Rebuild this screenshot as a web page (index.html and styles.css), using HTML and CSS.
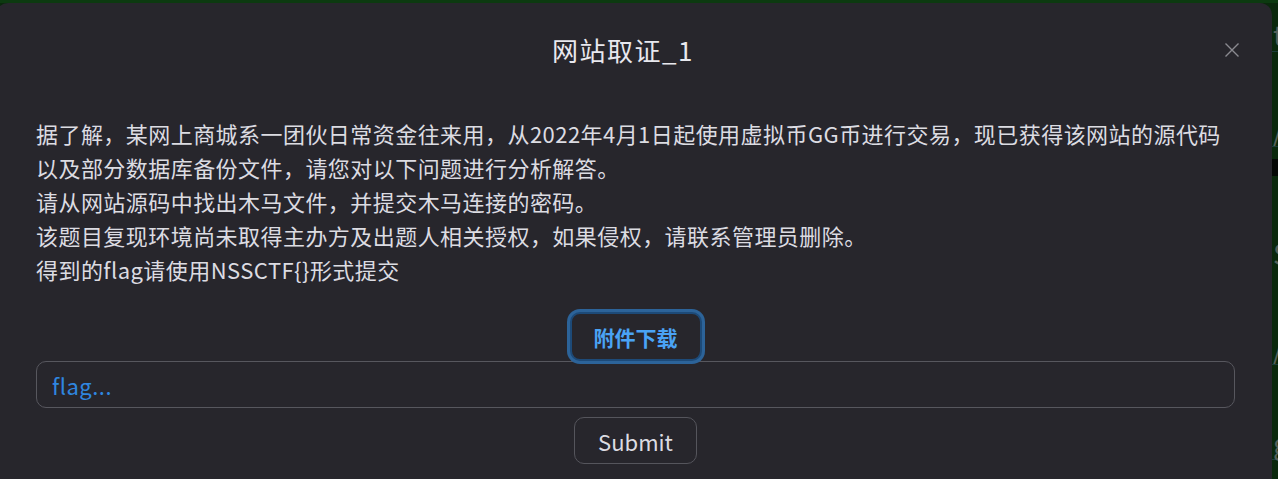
FILE: index.html
```html
<!DOCTYPE html>
<html>
<head>
    <title>网站取证_1</title>
    <link rel="stylesheet" href="styles.css">
</head>
<body>
    <div class="page">
        <div class="page-main"></div>
        <div class="page-side">
            <div class="side-row"><span>t</span></div>
            <div class="side-row"><span>/</span></div>
            <div class="side-block"></div>
            <div class="side-row plain"><span>S</span></div>
            <div class="side-row"><span>/</span></div>
            <div class="side-row"><span>g</span></div>
            <div class="side-row plain"><span>t</span></div>
        </div>
    </div>

    <div class="modal">
        <div class="modal-header">
            <h2 class="modal-title">网站取证_1</h2>
            <button class="close-btn" aria-label="close">
                <svg width="16" height="16" viewBox="0 0 16 16">
                    <path d="M1.5 1.5 L14.5 14.5 M14.5 1.5 L1.5 14.5" stroke="#8a8a90" stroke-width="1.4" fill="none"/>
                </svg>
            </button>
        </div>
        <div class="modal-body">
            <p class="desc">
                据了解，某网上商城系一团伙日常资金往来用，从2022年4月1日起使用虚拟币GG币进行交易，现已获得该网站的源代码以及部分数据库备份文件，请您对以下问题进行分析解答。<br>
                请从网站源码中找出木马文件，并提交木马连接的密码。<br>
                该题目复现环境尚未取得主办方及出题人相关授权，如果侵权，请联系管理员删除。<br>
                得到的flag请使用NSSCTF{}形式提交
            </p>
            <div class="attach-row">
                <button class="attach-btn">附件下载</button>
            </div>
            <input type="text" class="flag-input" placeholder="flag...">
            <div class="submit-row">
                <button class="submit-btn">Submit</button>
            </div>
        </div>
    </div>
</body>
</html>
```

FILE: styles.css
```css
html, body {
    margin: 0;
    padding: 0;
    height: 100%;
    overflow: hidden;
}
body {
    background-color: #0a280c;
    font-family: "Noto Sans CJK SC", "Noto Sans", sans-serif;
    color: #dcdce2;
}
.page {
    display: flex;
    height: 100%;
    border-top: 3px solid #0c3a10;
    box-sizing: border-box;
}
.page-main {
    width: 1272px;
    flex-shrink: 0;
}
.page-side {
    flex: 1;
    padding-top: 14px;
}
.side-row {
    height: 34px;
    border-bottom: 1px solid #1d3d3a;
    margin-bottom: 60px;
    font-size: 28px;
    line-height: 34px;
    color: #55605a;
    padding-left: 1px;
}
.side-row.plain {
    border-bottom: none;
}
.side-block {
    height: 17px;
    background-color: #050805;
    margin: -48px 0 60px;
}
.modal {
    position: absolute;
    top: 3px;
    left: -4px;
    width: 1276px;
    height: 520px;
    background-color: #27262c;
    border-radius: 12px;
}
.modal-header {
    display: flex;
    align-items: center;
    padding: 32px 18px 0 40px;
}
.modal-title {
    flex: 1;
    margin: 0;
    text-align: center;
    font-size: 26px;
    font-weight: normal;
    letter-spacing: 1.5px;
    line-height: 30px;
    color: #e8e8ee;
}
.close-btn {
    width: 44px;
    height: 30px;
    background: none;
    border: none;
    padding: 0;
    cursor: pointer;
    display: flex;
    align-items: center;
    justify-content: center;
}
.modal-body {
    padding: 51px 37px 0 40px;
}
.desc {
    margin: 0;
    font-size: 22px;
    letter-spacing: 0.45px;
    line-height: 34px;
    color: #dcdce2;
}
.attach-row {
    display: flex;
    justify-content: center;
    margin-top: 26px;
    position: relative;
    z-index: 1;
}
.attach-btn {
    width: 132px;
    height: 49px;
    background-color: #27262c;
    border: 2px solid #1d4a78;
    border-radius: 10px;
    box-shadow: 0 0 0 3px #2c6399;
    color: #4aa3f5;
    font-family: inherit;
    font-size: 21px;
    font-weight: bold;
    cursor: pointer;
}
.flag-input {
    display: block;
    width: 100%;
    height: 47px;
    box-sizing: border-box;
    background-color: #27262c;
    border: 1px solid #57575e;
    border-radius: 10px;
    padding: 0 15px;
    font-family: inherit;
    font-size: 22px;
    letter-spacing: 0.5px;
    color: #dcdce2;
}
.flag-input::placeholder {
    color: #2f86e0;
}
.submit-row {
    display: flex;
    justify-content: center;
    margin-top: 9px;
}
.submit-btn {
    width: 123px;
    height: 47px;
    background-color: #27262c;
    border: 1px solid #55555c;
    border-radius: 10px;
    color: #dcdce2;
    font-family: inherit;
    font-size: 22px;
    cursor: pointer;
}
```
